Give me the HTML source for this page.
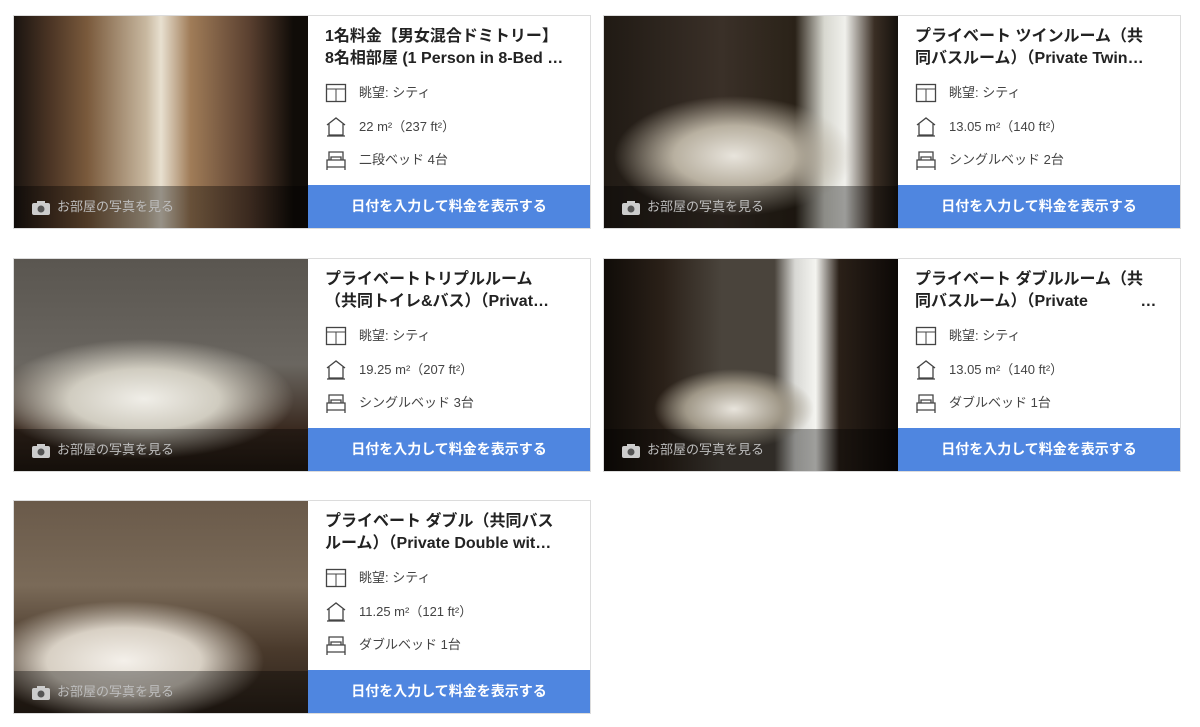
<!DOCTYPE html>
<html><head><meta charset="utf-8"><style>
body{margin:0;width:1200px;height:727px;background:#fff;position:relative;overflow:hidden;font-family:"Liberation Sans","Noto Sans CJK JP",sans-serif;}
.card{position:absolute;width:576px;height:212px;border:1px solid #dcdcdc;background:#fff;}
.img{position:absolute;left:0;top:0;width:294px;height:212px;overflow:hidden;}
.ph{position:absolute;left:0;bottom:0;width:294px;height:42px;background:rgba(0,0,0,.35);color:#bdbdbd;font-size:13px;line-height:42px;}
.ph svg{position:absolute;left:17px;top:14px}
.ph span{position:absolute;left:43px;}
.info{position:absolute;left:294px;top:0;width:282px;height:212px;}
.t{position:absolute;left:17px;top:10px;width:258px;font-size:16px;font-weight:bold;line-height:22px;color:#222;white-space:nowrap;overflow:hidden;}
.r{position:absolute;left:17px;font-size:13px;color:#444;height:22px;line-height:22px;}
.r svg{position:absolute;left:0;top:0}
.r span{position:absolute;left:34px;white-space:nowrap}
.btn{position:absolute;left:0;bottom:0;width:282px;height:43px;background:#4f86e0;color:#fff;font-size:14px;font-weight:bold;text-align:center;line-height:43px;}
</style></head><body>
<div class="card" style="left:13px;top:15px">
<div class="img" style="background:linear-gradient(90deg,#1a1410 0%,#4a3424 12%,#7a5a3c 25%,#c8b8a0 45%,#e8e0d0 50%,#a07c58 60%,#5a4030 80%,#100c08 95%)"></div>
<div class="ph"><svg width="20" height="16"><rect x="1" y="3" width="18" height="12" rx="2" fill="#ccc"/><rect x="6" y="1" width="8" height="4" fill="#ccc"/><circle cx="10" cy="9" r="3.5" fill="#555"/></svg><span>お部屋の写真を見る</span></div>
<div class="info"><div class="t">1名料金【男女混合ドミトリー】<br>8名相部屋 (1 Person in 8-Bed …</div>
<div class="r" style="top:66px"><svg width="22" height="22"><rect x="1.5" y="2.5" width="19" height="17" fill="none" stroke="#444" stroke-width="1.3"/><line x1="1.5" y1="7" x2="20.5" y2="7" stroke="#444"/><line x1="11" y1="7" x2="11" y2="19.5" stroke="#444"/></svg><span>眺望: シティ</span></div>
<div class="r" style="top:100px"><svg width="22" height="22"><path d="M2 9 L11 2 L20 9 M4 8 V19 H18 V8 M2 20 H20" fill="none" stroke="#444" stroke-width="1.3"/></svg><span>22 m²（237 ft²）</span></div>
<div class="r" style="top:133px"><svg width="22" height="22"><path d="M4 11 V3 H18 V11 M2 11 H20 V18 H2 Z M2 18 V21 M20 18 V21 M6 11 V8 H16 V11" fill="none" stroke="#444" stroke-width="1.3"/></svg><span>二段ベッド 4台</span></div>
<div class="btn">日付を入力して料金を表示する</div></div></div>

<div class="card" style="left:603px;top:15px">
<div class="img" style="background:radial-gradient(ellipse 120px 60px at 130px 140px,#e8e4dc 0%,#b8b0a0 50%,transparent 100%),linear-gradient(90deg,#201a14 0%,#3a3028 40%,#2a2218 65%,#d8d8d0 75%,#f0f0ec 82%,#3a2e24 92%,#15110d 100%)"></div>
<div class="ph"><svg width="20" height="16"><rect x="1" y="3" width="18" height="12" rx="2" fill="#ccc"/><rect x="6" y="1" width="8" height="4" fill="#ccc"/><circle cx="10" cy="9" r="3.5" fill="#555"/></svg><span>お部屋の写真を見る</span></div>
<div class="info"><div class="t">プライベート ツインルーム（共<br>同バスルーム）（Private Twin…</div>
<div class="r" style="top:66px"><svg width="22" height="22"><rect x="1.5" y="2.5" width="19" height="17" fill="none" stroke="#444" stroke-width="1.3"/><line x1="1.5" y1="7" x2="20.5" y2="7" stroke="#444"/><line x1="11" y1="7" x2="11" y2="19.5" stroke="#444"/></svg><span>眺望: シティ</span></div>
<div class="r" style="top:100px"><svg width="22" height="22"><path d="M2 9 L11 2 L20 9 M4 8 V19 H18 V8 M2 20 H20" fill="none" stroke="#444" stroke-width="1.3"/></svg><span>13.05 m²（140 ft²）</span></div>
<div class="r" style="top:133px"><svg width="22" height="22"><path d="M4 11 V3 H18 V11 M2 11 H20 V18 H2 Z M2 18 V21 M20 18 V21 M6 11 V8 H16 V11" fill="none" stroke="#444" stroke-width="1.3"/></svg><span>シングルベッド 2台</span></div>
<div class="btn">日付を入力して料金を表示する</div></div></div>

<div class="card" style="left:13px;top:258px">
<div class="img" style="background:radial-gradient(ellipse 150px 60px at 130px 140px,#f0eee8 0%,#d0ccc0 50%,transparent 100%),linear-gradient(180deg,#5a5650 0%,#6a6660 50%,#3a2a20 80%,#201810 100%)"></div>
<div class="ph"><svg width="20" height="16"><rect x="1" y="3" width="18" height="12" rx="2" fill="#ccc"/><rect x="6" y="1" width="8" height="4" fill="#ccc"/><circle cx="10" cy="9" r="3.5" fill="#555"/></svg><span>お部屋の写真を見る</span></div>
<div class="info"><div class="t">プライベートトリプルルーム<br>（共同トイレ&amp;バス）（Privat…</div>
<div class="r" style="top:66px"><svg width="22" height="22"><rect x="1.5" y="2.5" width="19" height="17" fill="none" stroke="#444" stroke-width="1.3"/><line x1="1.5" y1="7" x2="20.5" y2="7" stroke="#444"/><line x1="11" y1="7" x2="11" y2="19.5" stroke="#444"/></svg><span>眺望: シティ</span></div>
<div class="r" style="top:100px"><svg width="22" height="22"><path d="M2 9 L11 2 L20 9 M4 8 V19 H18 V8 M2 20 H20" fill="none" stroke="#444" stroke-width="1.3"/></svg><span>19.25 m²（207 ft²）</span></div>
<div class="r" style="top:133px"><svg width="22" height="22"><path d="M4 11 V3 H18 V11 M2 11 H20 V18 H2 Z M2 18 V21 M20 18 V21 M6 11 V8 H16 V11" fill="none" stroke="#444" stroke-width="1.3"/></svg><span>シングルベッド 3台</span></div>
<div class="btn">日付を入力して料金を表示する</div></div></div>

<div class="card" style="left:603px;top:258px">
<div class="img" style="background:radial-gradient(ellipse 80px 40px at 130px 150px,#e8e4dc 0%,#a09888 60%,transparent 100%),linear-gradient(90deg,#100c08 0%,#2a2018 20%,#4a443c 40%,#4a443c 58%,#d8d8d4 65%,#f4f4f0 72%,#2a2018 80%,#0c0806 100%)"></div>
<div class="ph"><svg width="20" height="16"><rect x="1" y="3" width="18" height="12" rx="2" fill="#ccc"/><rect x="6" y="1" width="8" height="4" fill="#ccc"/><circle cx="10" cy="9" r="3.5" fill="#555"/></svg><span>お部屋の写真を見る</span></div>
<div class="info"><div class="t">プライベート ダブルルーム（共<br>同バスルーム）（Private　　　 …</div>
<div class="r" style="top:66px"><svg width="22" height="22"><rect x="1.5" y="2.5" width="19" height="17" fill="none" stroke="#444" stroke-width="1.3"/><line x1="1.5" y1="7" x2="20.5" y2="7" stroke="#444"/><line x1="11" y1="7" x2="11" y2="19.5" stroke="#444"/></svg><span>眺望: シティ</span></div>
<div class="r" style="top:100px"><svg width="22" height="22"><path d="M2 9 L11 2 L20 9 M4 8 V19 H18 V8 M2 20 H20" fill="none" stroke="#444" stroke-width="1.3"/></svg><span>13.05 m²（140 ft²）</span></div>
<div class="r" style="top:133px"><svg width="22" height="22"><path d="M4 11 V3 H18 V11 M2 11 H20 V18 H2 Z M2 18 V21 M20 18 V21 M6 11 V8 H16 V11" fill="none" stroke="#444" stroke-width="1.3"/></svg><span>ダブルベッド 1台</span></div>
<div class="btn">日付を入力して料金を表示する</div></div></div>

<div class="card" style="left:13px;top:500px">
<div class="img" style="background:radial-gradient(ellipse 140px 60px at 110px 160px,#f4f0ea 0%,#d8d0c4 55%,transparent 100%),linear-gradient(180deg,#6a5a4a 0%,#7a6a58 40%,#4a3a2c 70%,#2a2018 100%)"></div>
<div class="ph"><svg width="20" height="16"><rect x="1" y="3" width="18" height="12" rx="2" fill="#ccc"/><rect x="6" y="1" width="8" height="4" fill="#ccc"/><circle cx="10" cy="9" r="3.5" fill="#555"/></svg><span>お部屋の写真を見る</span></div>
<div class="info"><div class="t">プライベート ダブル（共同バス<br>ルーム）（Private Double wit…</div>
<div class="r" style="top:66px"><svg width="22" height="22"><rect x="1.5" y="2.5" width="19" height="17" fill="none" stroke="#444" stroke-width="1.3"/><line x1="1.5" y1="7" x2="20.5" y2="7" stroke="#444"/><line x1="11" y1="7" x2="11" y2="19.5" stroke="#444"/></svg><span>眺望: シティ</span></div>
<div class="r" style="top:100px"><svg width="22" height="22"><path d="M2 9 L11 2 L20 9 M4 8 V19 H18 V8 M2 20 H20" fill="none" stroke="#444" stroke-width="1.3"/></svg><span>11.25 m²（121 ft²）</span></div>
<div class="r" style="top:133px"><svg width="22" height="22"><path d="M4 11 V3 H18 V11 M2 11 H20 V18 H2 Z M2 18 V21 M20 18 V21 M6 11 V8 H16 V11" fill="none" stroke="#444" stroke-width="1.3"/></svg><span>ダブルベッド 1台</span></div>
<div class="btn">日付を入力して料金を表示する</div></div></div>
</body></html>
